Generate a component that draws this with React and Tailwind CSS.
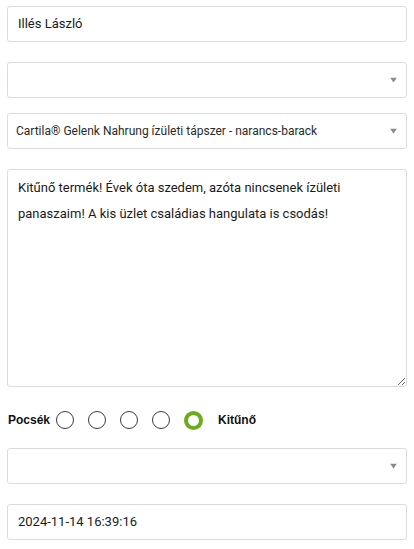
import React from 'react'

const font = { fontFamily: 'Roboto, "Liberation Sans", sans-serif' }

// Small caret used on the select-like fields
const Caret = () => (
  <svg width="7" height="5" viewBox="0 0 7 5" className="absolute right-[9px] top-1/2 -translate-y-1/2">
    <path d="M0 0 H7 L3.5 5 Z" fill="#8a8a8a" />
  </svg>
)

const Field = ({ children, select = false, className = '' }) => (
  <div
    className={`relative h-[36px] w-full rounded-[3px] border border-[#dcdcdc] bg-white flex items-center ${
      select ? 'pl-[8px] text-[12px] text-[#2a2a2a]' : 'pl-[10px] text-[13px] text-[#1a1a1a]'
    } ${className}`}
  >
    <span className="truncate">{children}</span>
    {select && <Caret />}
  </div>
)

const Radio = ({ checked }) =>
  checked ? (
    <span className="block h-[19px] w-[19px] rounded-full border-[4px] border-[#6aac1a] bg-white" />
  ) : (
    <span className="block h-[18px] w-[18px] rounded-full border border-[#3a3a3a] bg-white" />
  )

export default function App() {
  return (
    <div className="min-h-[549px] w-[414px] bg-white px-[7px] pt-[6px]" style={font}>
      <Field>Illés László</Field>
      <Field select className="mt-[20px]" />
      <Field select className="mt-[15px]">
        Cartila® Gelenk Nahrung ízületi tápszer - narancs-barack
      </Field>

      <textarea
        className="mt-[20px] block h-[218px] w-full rounded-[3px] border border-[#dcdcdc] bg-white pl-[10px] pr-[10px] pt-[5px] text-[13px] leading-[26px] text-[#1a1a1a] outline-none"
        style={font}
        defaultValue="Kitűnő termék! Évek óta szedem, azóta nincsenek ízületi panaszaim! A kis üzlet családias hangulata is csodás!"
      />

      <div
        className="mt-[16px] flex h-[34px] items-center pl-[1px] text-[12px] font-bold text-[#111]"
        style={{ fontFamily: '"Liberation Sans", Arial, sans-serif' }}
      >
        <span className="mr-[6px]">Pocsék</span>
        <div className="flex items-center gap-[14px]">
          <Radio />
          <Radio />
          <Radio />
          <Radio />
          <Radio checked />
        </div>
        <span className="ml-[15px]">Kitűnő</span>
      </div>

      <Field select className="mt-[11px]" />
      <Field className="mt-[20px]">2024-11-14 16:39:16</Field>
    </div>
  )
}
